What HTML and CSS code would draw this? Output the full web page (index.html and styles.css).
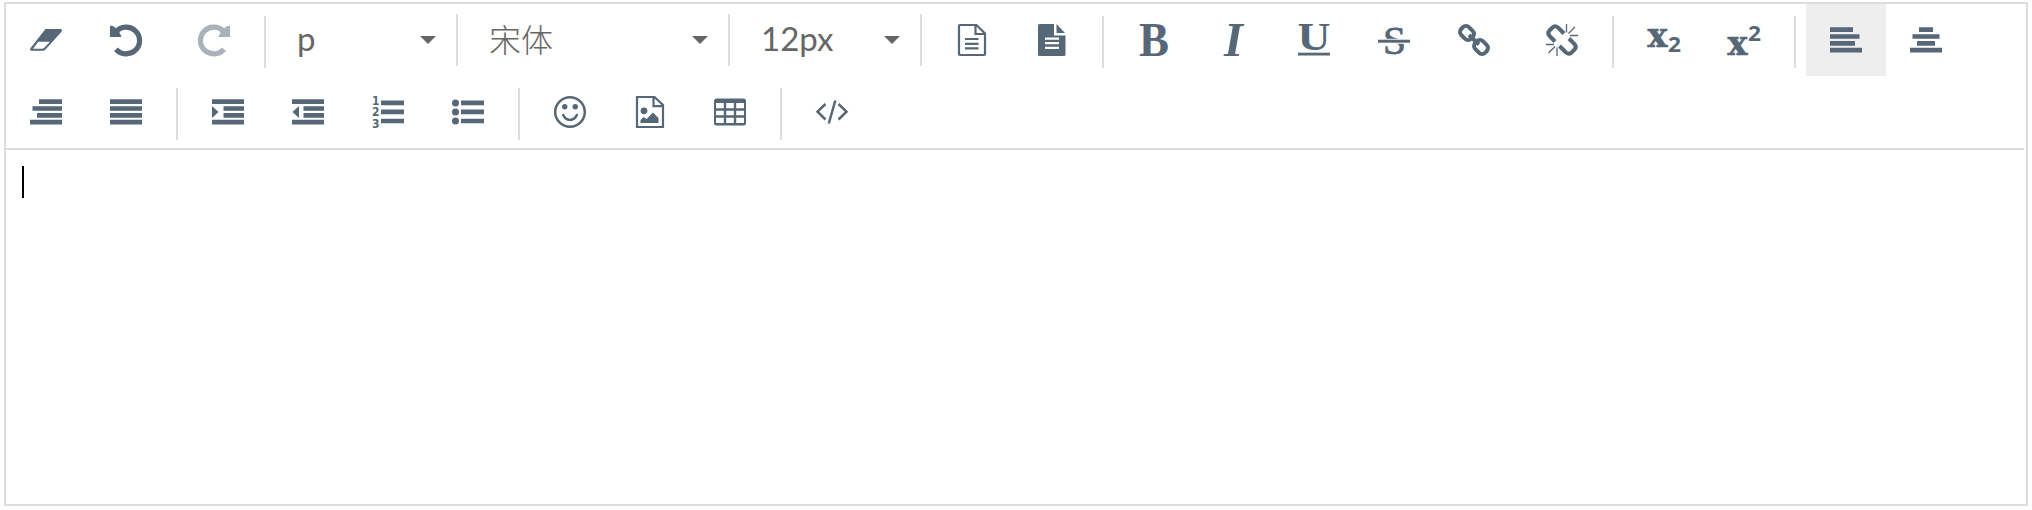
FILE: index.html
```html
<!DOCTYPE html>
<html lang="zh-CN">
<head>
<meta charset="utf-8">
<title>Editor</title>
<link rel="stylesheet" href="styles.css">
</head>
<body>
<div class="editor">
  <div class="toolbar">
    <div class="row">
      <button class="btn"><svg viewBox="0 0 32 32"><path fill-rule="evenodd" d="M16 5H30.500Q33 5.100 31.300 7.900L15.500 25.400Q14.300 26.800 12.500 26.800H1.500Q-1 26.700.600 24L14.500 6.200Q15.200 5 16 5ZM8.300 17.800L3 24.800H12.200Q13.200 24.800 14 24L19.300 18.500Q20 17.800 19 17.800Z"/></svg></button>
      <button class="btn"><svg viewBox="0 0 32 32"><path d="M0 1.500V13H11.500L9.500 8.500L4 2.500Z"/><path class="s5" d="M6 7.800A13.400 13.400 0 1 1 6 25.200"/></svg></button>
      <button class="btn redo"><svg viewBox="0 0 32 32"><path d="M32 1.500V13H20.500L22.500 8.500L28 2.500Z"/><path class="s5" d="M26 7.800A13.400 13.400 0 1 0 26 25.200"/></svg></button>
      <i class="sep"></i>
      <div class="select format"><span class="latin">p</span><i class="caret"></i></div>
      <i class="sep high"></i>
      <div class="select family"><span class="han">宋体</span><i class="caret"></i></div>
      <i class="sep high"></i>
      <div class="select size"><span class="latin">12px</span><i class="caret"></i></div>
      <i class="sep high end"></i>
      <button class="btn"><svg viewBox="0 0 32 32"><path class="s15" d="M20 1H4Q3 1 3 2V30Q3 31 4 31H28Q29 31 29 30V9.500L20.500 1H19.500V10H29M9 15H22.500M9 19.800H22.500M9 24.300H22.500"/></svg></button>
      <button class="btn"><svg viewBox="0 0 32 32"><path fill-rule="evenodd" d="M18 0H3.500Q2 0 2 1.500V30.500Q2 32 3.500 32H28Q29.500 32 29.500 30.500V11.500H18ZM9 13.500H23V15.700H9ZM9 18H23V20.200H9ZM9 22.700H23V25H9Z"/><path d="M20.500 0V9H29Z"/></svg></button>
      <i class="sep"></i>
      <button class="btn"><svg viewBox="0 0 32 32"><text class="serif" x="1" y="32" font-size="48.500" textLength="30" lengthAdjust="spacingAndGlyphs">B</text></svg></button>
      <button class="btn"><svg viewBox="0 0 32 32"><text class="serif italic" x="6" y="32" font-size="48.500" textLength="19" lengthAdjust="spacingAndGlyphs">I</text></svg></button>
      <button class="btn"><svg viewBox="0 0 32 32"><text class="serif" x="-.5" y="26" font-size="40" textLength="33" lengthAdjust="spacingAndGlyphs">U</text><rect y="28.700" width="32" height="2.800"/></svg></button>
      <button class="btn"><svg viewBox="0 0 32 32"><text class="serif regular" x="5" y="29.500" font-size="41" textLength="23" lengthAdjust="spacingAndGlyphs">S</text><rect y="14.800" width="32" height="5" fill="#fff"/><rect y="15.700" width="32" height="3"/></svg></button>
      <button class="btn"><svg viewBox="0 0 32 32"><g class="s35"><rect x="-7" y="-5.500" width="14" height="11" rx="4.500" transform="translate(9 9) rotate(45)"/><rect x="-7" y="-5.500" width="14" height="11" rx="4.500" transform="translate(23 23) rotate(45)"/><path d="M11 11L21 20.500"/></g></svg></button>
      <button class="btn unlink"><svg viewBox="0 0 32 32"><g class="s35"><path d="M9 17.500L3.500 12Q1 9 3.500 6.500L6.500 3.500Q9 1 12 3.500L18 9.500M23 14.500L28.500 20Q31 23 28.500 25.500L25.500 28.500Q23 31 20 28.500L13.500 22"/></g><path class="s1" d="M20.500 8.500V0M22.500 9.500L29 3M24 11.500H32M11 23.500V32M9 22.500L2.500 29M8 20.500H0"/></svg></button>
      <i class="sep"></i>
      <button class="btn"><svg viewBox="0 0 32 32"><text class="slab" x="-.5" y="22.500" font-size="34" textLength="20" lengthAdjust="spacingAndGlyphs">x</text><text class="digit" x="20" y="28" font-size="22" textLength="13" lengthAdjust="spacingAndGlyphs">2</text></svg></button>
      <button class="btn"><svg viewBox="0 0 32 32"><text class="slab" x="-.5" y="30.500" font-size="34" textLength="20" lengthAdjust="spacingAndGlyphs">x</text><text class="digit" x="20" y="17" font-size="22" textLength="13" lengthAdjust="spacingAndGlyphs">2</text></svg></button>
      <i class="sep"></i>
      <button class="btn active"><svg viewBox="0 0 32 32"><path class="s45" d="M0 5.700H23M0 12.500H29.500M0 19.300H25M0 26.200H32"/></svg></button>
      <button class="btn"><svg viewBox="0 0 32 32"><path class="s45" d="M9 5.700H23M2.500 12.500H29.500M7 19.300H25M0 26.200H32"/></svg></button>
    </div>
    <div class="row">
      <button class="btn"><svg viewBox="0 0 32 32"><path class="s45" d="M9 5.700H32M2.500 12.500H32M7 19.300H32M0 26.200H32"/></svg></button>
      <button class="btn"><svg viewBox="0 0 32 32"><path class="s45" d="M0 5.700H32M0 12.500H32M0 19.300H32M0 26.200H32"/></svg></button>
      <i class="sep"></i>
      <button class="btn"><svg viewBox="0 0 32 32"><path class="s45" d="M0 5.700H32M11.500 12.500H32M11.500 19.300H32M0 26.200H32"/><path d="M0 10V22L6.500 16Z"/></svg></button>
      <button class="btn"><svg viewBox="0 0 32 32"><path class="s45" d="M0 5.700H32M11.500 12.500H32M11.500 19.300H32M0 26.200H32"/><path d="M7 10V22L.5 16Z"/></svg></button>
      <button class="btn"><svg viewBox="0 0 32 32"><path class="s45" d="M9 6.900H32M9 15.900H32M9 25H32"/><g class="mark"><text x="0" y="8.700" font-size="11.500" textLength="7.500" lengthAdjust="spacingAndGlyphs">1</text><text x="0" y="20.200" font-size="11.500" textLength="7.500" lengthAdjust="spacingAndGlyphs">2</text><text x="0" y="31.600" font-size="11.500" textLength="7.500" lengthAdjust="spacingAndGlyphs">3</text></g></svg></button>
      <button class="btn"><svg viewBox="0 0 32 32"><path class="s45" d="M9 6.900H32M9 15.900H32M9 25H32"/><circle cx="3.500" cy="6.900" r="3.500"/><circle cx="3.500" cy="15.900" r="3.500"/><circle cx="3.500" cy="25" r="3.500"/></svg></button>
      <i class="sep"></i>
      <button class="btn"><svg viewBox="0 0 32 32"><circle class="s2" cx="16" cy="16" r="14.800"/><circle cx="10.700" cy="10.700" r="2.700"/><circle cx="21.300" cy="10.700" r="2.700"/><path class="s2 round" d="M9.200 19C12 25.500 20 25.500 22.800 19"/></svg></button>
      <button class="btn"><svg viewBox="0 0 32 32"><path class="s15" d="M20 1H3V31H29V9L20.500 1H19.500V10.200H29"/><circle cx="10" cy="14.800" r="3.400"/><path d="M6.500 27V24L9.500 21L12.500 23L19 16.500L24.500 22V27Z"/></svg></button>
      <button class="btn"><svg viewBox="0 0 32 32"><path fill-rule="evenodd" d="M2.500 2.500H29.500Q32 2.500 32 5V27Q32 29.500 29.500 29.500H2.500Q0 29.500 0 27V5Q0 2.500 2.500 2.500ZM2 7V12.300H9.800V7ZM12.200 7V12.300H19.800V7ZM22.200 7V12.300H30V7ZM2 14.700V19.300H9.800V14.700ZM12.200 14.700V19.300H19.800V14.700ZM22.200 14.700V19.300H30V14.700ZM2 21.700V27H9.800V21.700ZM12.200 21.700V27H19.800V21.700ZM22.200 21.700V27H30V21.700Z"/></svg></button>
      <i class="sep"></i>
      <button class="btn"><svg viewBox="0 0 32 32"><path class="s2" d="M9.500 8L1.500 15.700L9.500 23.500M22.500 8L30.500 15.700L22.500 23.500M19.300 4.500L12.800 27.500"/></svg></button>
    </div>
  </div>
  <div class="content"><i class="cursor"></i></div>
</div>
</body>
</html>
```
FILE: styles.css
```css
* { box-sizing: border-box; }
body { margin: 0; background: #fff; }
.editor {
  display: flex;
  flex-direction: column;
  width: 2024px;
  height: 504px;
  margin: 2px 4px;
  border: 2px solid #ddd;
}
.toolbar {
  width: 2018px;
  border-bottom: 2px solid #ddd;
}
.row { display: flex; height: 72px; }
.btn {
  flex: none;
  display: flex;
  justify-content: center;
  width: 80px;
  height: 72px;
  padding: 20px 0 0;
  border: 0;
  background: none;
}
.btn svg {
  width: 32px;
  height: 32px;
  overflow: visible;
  fill: #566777;
}
.btn.redo { margin-left: 8px; }
.btn.redo svg { opacity: .5; }
.btn.unlink { margin-left: 8px; }
.btn.active { background: #eee; }
.sep {
  flex: none;
  width: 2px;
  height: 52px;
  margin: 12px 10px 0;
  background: #ddd;
}
.sep.high { margin: 10px 0 0; }
.sep.end { margin-right: 10px; }
.select {
  flex: none;
  display: flex;
  align-items: center;
  justify-content: space-between;
  height: 72px;
  padding: 0 20px 0 31px;
  color: #666;
  font-size: 32px;
  line-height: 40px;
}
.format { width: 190px; margin-left: -10px; }
.family { width: 270px; }
.size { width: 190px; }
.latin {
  padding-bottom: 5px;
  font-family: Lato, "Liberation Sans", sans-serif;
  font-size: 33px;
}
.han {
  padding-bottom: 4px;
  font-family: "Noto Sans CJK SC", sans-serif;
  font-weight: 300;
}
.caret {
  width: 16px;
  border: 8px solid transparent;
  border-top-color: #666;
  border-bottom: 0;
}
.s1, .s15, .s2, .s35, .s45, .s5 { fill: none; stroke: #566777; }
.s1 { stroke-width: 1.3; }
.s15 { stroke-width: 2.2; }
.s2 { stroke-width: 2.5; }
.s35 { stroke-width: 4; }
.s45 { stroke-width: 4.7; }
.s5 { stroke-width: 5.2; }
.round { stroke-linecap: round; }
.serif { font-family: "Liberation Serif", serif; font-weight: 700; }
.italic { font-style: italic; }
.regular { font-weight: 400; stroke: #566777; stroke-width: .8; }
.slab {
  font-family: "DejaVu Serif", serif;
  font-weight: 700;
  stroke: #566777;
  stroke-width: .6;
}
.digit { font-family: "Noto Sans", sans-serif; font-weight: 700; }
.mark { font-family: "DejaVu Sans", sans-serif; font-weight: 700; }
.content { flex: 1; padding: 16px; }
.cursor { display: block; width: 2px; height: 32px; background: #000; }
```
